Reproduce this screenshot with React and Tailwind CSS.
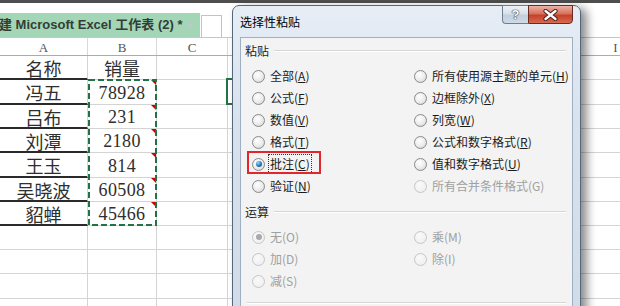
import React from 'react';

const CJK = "font-['Noto_Sans_CJK_SC','Noto_Sans',sans-serif]";

const COLS = [
  ['A', 'w-[88px]', 'A'],
  ['B', 'w-[69px]', 'B'],
  ['C', 'w-[71px]', 'C'],
  ['D', 'w-[70px]', ''],
  ['E', 'w-[70px]', ''],
  ['F', 'w-[70px]', ''],
  ['G', 'w-[71px]', ''],
  ['H', 'w-[71px]', ''],
  ['I', 'w-[72px]', 'I'],
];

const ROWS = [
  { h: 'h-[24px]', a: '名称', b: '销量' },
  { h: 'h-[25px]', a: '冯五', b: '78928', c: true },
  { h: 'h-[24px]', a: '吕布', b: '231', c: true },
  { h: 'h-[24px]', a: '刘潭', b: '2180', c: true },
  { h: 'h-[25px]', a: '王玉', b: '814', c: true },
  { h: 'h-[24px]', a: '吴晓波', b: '60508', c: true },
  { h: 'h-[24px]', a: '貂蝉', b: '45466', c: true },
  { h: 'h-[24px]' },
  { h: 'h-[24px]' },
  { h: 'h-[25px]' },
  { h: 'h-[24px]' },
];

const PASTE = [
  [['全部', 'A'], ['所有使用源主题的单元', 'H']],
  [['公式', 'F'], ['边框除外', 'X']],
  [['数值', 'V'], ['列宽', 'W']],
  [['格式', 'T'], ['公式和数字格式', 'R']],
  [['批注', 'C', { checked: true, focus: true }], ['值和数字格式', 'U']],
  [['验证', 'N'], ['所有合并条件格式', 'G', { disabled: true }]],
];

const OPS = [
  [['无', 'O', { checked: true, disabled: true }], ['乘', 'M', { disabled: true }]],
  [['加', 'D', { disabled: true }], ['除', 'I', { disabled: true }]],
  [['减', 'S', { disabled: true }], null],
];

function RadioDot({ checked, disabled }) {
  return (
    <span
      className={`flex h-[13px] w-[13px] shrink-0 items-center justify-center rounded-full border ${
        disabled
          ? 'border-[#c6c6c6] bg-[radial-gradient(circle_at_40%_35%,#fafafa_0%,#ececec_100%)]'
          : 'border-[#8a8a8a] bg-[radial-gradient(circle_at_40%_35%,#ffffff_0%,#ededed_50%,#cfcfcf_100%)]'
      }`}
    >
      {checked && (
        <span
          className={`h-[6px] w-[6px] rounded-full ${
            disabled
              ? 'bg-[#a9a9a9]'
              : 'bg-[radial-gradient(circle_at_35%_30%,#9fdaf8_0%,#2d7fbd_50%,#0b3b66_100%)]'
          }`}
        />
      )}
    </span>
  );
}

function Opt({ o }) {
  if (!o) return <div className="h-[22px]" />;
  const [t, k, f = {}] = o;
  return (
    <div className="flex h-[22px] items-center gap-[5px]">
      <RadioDot checked={f.checked} disabled={f.disabled} />
      <span
        className={`${CJK} text-[12px] leading-[16px] ${
          f.disabled ? 'text-[#a0a0a0]' : 'text-[#1b1b1b]'
        } ${f.focus ? 'outline-1 outline-offset-[1px] outline-dotted outline-[#333333]' : ''}`}
      >
        {t}(
        {f.disabled ? k : <u>{k}</u>})
      </span>
    </div>
  );
}

function Section({ label }) {
  return (
    <div className="flex h-[16px] items-center pl-[4px] pr-[6px]">
      <span className={`${CJK} text-[12px] leading-[16px] text-[#1b1b1b]`}>{label}</span>
      <div className="ml-[5px] h-[2px] flex-1 border-t border-b border-t-[#d6d6d6] border-b-white" />
    </div>
  );
}

function Dialog() {
  return (
    <div className="absolute left-[232px] top-[5px] flex h-[330px] w-[349px] flex-col rounded-t-[7px] border border-[#56677c] bg-[linear-gradient(180deg,#e6edf5_0%,#d8e2ed_35%,#cfdbe8_100%)] px-[7px] shadow-[6px_3px_10px_rgba(0,0,0,0.45)]">
      <div className="flex h-[31px] items-start">
        <div className={`${CJK} self-center text-[12px] leading-[16px] text-black`}>选择性粘贴</div>
        <div className="-mt-[1px] ml-auto flex">
          <div className="flex h-[19px] w-[26px] items-center justify-center rounded-bl-[4px] border border-r-0 border-[#6f7e90] bg-[linear-gradient(180deg,#eef2f7_0%,#d7e0ea_45%,#c2cfdd_55%,#cfdae6_100%)]">
            <span className="font-['Liberation_Sans',sans-serif] text-[13px] font-bold leading-none text-white [text-shadow:0_0_1px_#2f3a48,0_0_1px_#2f3a48,0_0_1px_#2f3a48]">
              ?
            </span>
          </div>
          <div className="flex h-[19px] w-[45px] items-center justify-center rounded-br-[4px] border border-[#6b2a20] bg-[linear-gradient(180deg,#eab3a7_0%,#d8705c_45%,#c6412a_55%,#d66a52_100%)]">
            <svg width="15" height="12" viewBox="0 0 15 12">
              <path d="M2.5 2 L12.5 10 M12.5 2 L2.5 10" stroke="#4a1a14" strokeWidth="4.2" strokeLinecap="round" />
              <path d="M2.5 2 L12.5 10 M12.5 2 L2.5 10" stroke="#ffffff" strokeWidth="2.4" strokeLinecap="round" />
            </svg>
          </div>
        </div>
      </div>
      <div className="relative flex-1 border border-[#9eafc3] bg-[#f3f3f3] pt-[5px]">
        <Section label="粘贴" />
        <div className="mt-[6px] grid grid-cols-[162px_1fr] pl-[11px]">
          {PASTE.map((pair, i) => (
            <React.Fragment key={i}>
              <Opt o={pair[0]} />
              <Opt o={pair[1]} />
            </React.Fragment>
          ))}
        </div>
        <div className="mt-[7px]">
          <Section label="运算" />
        </div>
        <div className="mt-[6px] grid grid-cols-[162px_1fr] pl-[11px]">
          {OPS.map((pair, i) => (
            <React.Fragment key={i}>
              <Opt o={pair[0]} />
              <Opt o={pair[1]} />
            </React.Fragment>
          ))}
        </div>
        <div className="mx-[6px] mt-[10px] h-[2px] border-t border-b border-t-[#d6d6d6] border-b-white" />
        <div className="absolute left-[6px] top-[113px] h-[23px] w-[74px] border-2 border-[#e3262b]" />
      </div>
    </div>
  );
}

export default function App() {
  return (
    <div className="relative h-[306px] w-[620px] overflow-hidden bg-white">
      <div className="h-[3px] bg-[#4e4e4e]" />
      <div className="h-[10px]" />
      <div className="flex h-[24px]">
        <div className="flex w-[200px] shrink-0 items-center overflow-hidden bg-[#a3d6b6] pr-[6px]">
          <span className="-ml-[1px] whitespace-nowrap font-['Liberation_Sans','Noto_Sans_CJK_SC',sans-serif] text-[13px] font-bold text-[#333d37]">
            建 Microsoft Excel 工作表 (2) *
          </span>
          <span className="ml-auto font-['Liberation_Sans',sans-serif] text-[14px] font-bold text-[#bccbc2]">×</span>
        </div>
        <div className="ml-[1px] mt-[2px] h-[22px] w-[21px] border border-b-0 border-[#c3c3c3] bg-white" />
      </div>
      <div className="flex h-[19px] border-t border-b border-t-[#c6c6c6] border-b-[#ababab]">
        {COLS.map(([k, w, l]) => (
          <div
            key={k}
            className={`${w} flex shrink-0 items-center justify-center border-r border-[#d9d9d9] pt-[2px] font-['Liberation_Serif',serif] text-[13px] text-[#555555]`}
          >
            {l}
          </div>
        ))}
      </div>
      {ROWS.map((r, i) => (
        <div key={i} className={`flex shrink-0 ${r.h}`}>
          <div
            className={`flex w-[88px] shrink-0 items-center justify-center border-r border-r-[#d4d4d4] pt-[1px] ${
              i < 7 ? 'border-b-2 border-b-[#2a2a2a]' : 'border-b border-b-[#d4d4d4]'
            } ${CJK} text-[18px] leading-none text-[#2e2e2e]`}
          >
            {r.a}
          </div>
          <div className="relative flex w-[69px] shrink-0 items-center justify-center border-r border-b border-[#d4d4d4] pt-[1px] leading-none text-[#2e2e2e]">
            {r.b &&
              (/^\d/.test(r.b) ? (
                <span className="font-['Liberation_Serif',serif] text-[18px] tracking-[0.4px]">{r.b}</span>
              ) : (
                <span className={`${CJK} text-[18px]`}>{r.b}</span>
              ))}
            {r.c && (
              <span className="absolute right-0 top-0 h-0 w-0 border-l-[5px] border-t-[5px] border-l-transparent border-t-[#cc0000]" />
            )}
          </div>
          {COLS.slice(2).map(([k, w]) => (
            <div key={k} className={`${w} shrink-0 border-r border-b border-[#d4d4d4]`} />
          ))}
        </div>
      ))}
      <svg className="absolute left-[88px] top-[79px]" width="69" height="147" viewBox="0 0 69 147">
        <rect x="1" y="1" width="67" height="145" fill="none" stroke="#217346" strokeWidth="2" strokeDasharray="6 3" />
      </svg>
      <div className="absolute left-[226px] top-[78px] h-[27px] w-[30px] border-2 border-[#217346]" />
      <Dialog />
    </div>
  );
}
